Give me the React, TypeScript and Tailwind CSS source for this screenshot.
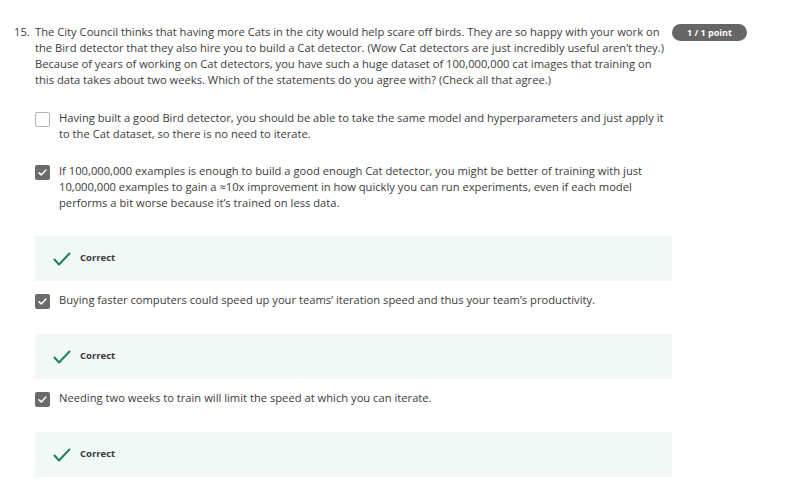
import React from 'react';

const font = { fontFamily: '"Open Sans", "Liberation Sans", sans-serif' };

function Box({ checked }: { checked: boolean }) {
  if (!checked) {
    return <span className="mt-[2px] block h-[15px] w-[15px] shrink-0 rounded-[2px] border border-[#b5b5b5] bg-white" />;
  }
  return (
    <span className="mt-[2px] flex h-[15px] w-[15px] shrink-0 items-center justify-center rounded-[2px] bg-[#6b6b6b]">
      <svg viewBox="0 0 16 16" className="h-[11px] w-[11px]" fill="none" stroke="#fff" strokeWidth="2.2" strokeLinecap="round" strokeLinejoin="round">
        <path d="M3 8.5l3.2 3L13 4.5" />
      </svg>
    </span>
  );
}

function Option({ checked, children }: { checked: boolean; children: React.ReactNode }) {
  return (
    <div className="flex items-start gap-[9px] pr-[4px]">
      <Box checked={checked} />
      <p className="text-[11.2px] leading-[16px] text-[#3c3c3c]">{children}</p>
    </div>
  );
}

function Correct() {
  return (
    <div className="flex h-[45px] items-center gap-[9px] bg-[#f2f8f6] pl-[18px]">
      <svg viewBox="0 0 18 14" className="h-[14px] w-[18px]" fill="none" stroke="#1f8354" strokeWidth="2" strokeLinecap="round" strokeLinejoin="round">
        <path d="M1.5 7.5l4.5 5L16.5 1.5" />
      </svg>
      <span className="text-[9.5px] font-bold text-[#3a3a3a]">Correct</span>
    </div>
  );
}

export default function App() {
  return (
    <div className="h-[483px] w-[795px] bg-white" style={font}>
      <div className="flex items-start pl-[14px] pt-[24px]">
        <div className="flex w-[651px] items-start">
          <span className="w-[21px] shrink-0 text-[11.2px] leading-[16px] text-[#3c3c3c]">15.</span>
          <div className="flex flex-1 flex-col">
            <p className="text-[11.2px] leading-[16px] text-[#3c3c3c]">
              The City Council thinks that having more Cats in the city would help scare off birds. They are so happy with your work on the Bird detector that they also hire you to build a Cat detector. (Wow Cat detectors are just incredibly useful aren’t they.) Because of years of working on Cat detectors, you have such a huge dataset of 100,000,000 cat images that training on this data takes about two weeks. Which of the statements do you agree with? (Check all that agree.)
            </p>
            <div className="mt-[22px] flex flex-col">
              <Option checked={false}>
                Having built a good Bird detector, you should be able to take the same model and hyperparameters and just apply it to the Cat dataset, so there is no need to iterate.
              </Option>
              <div className="mt-[21px]">
                <Option checked>
                  If 100,000,000 examples is enough to build a good enough Cat detector, you might be better of training with just 10,000,000 examples to gain a ≈10x improvement in how quickly you can run experiments, even if each model performs a bit worse because it’s trained on less data.
                </Option>
              </div>
              <div className="mt-[25px] w-[637px]">
                <Correct />
              </div>
              <div className="mt-[11px]">
                <Option checked>
                  Buying faster computers could speed up your teams’ iteration speed and thus your team’s productivity.
                </Option>
              </div>
              <div className="mt-[25px] w-[637px]">
                <Correct />
              </div>
              <div className="mt-[11px]">
                <Option checked>Needing two weeks to train will limit the speed at which you can iterate.</Option>
              </div>
              <div className="mt-[25px] w-[637px]">
                <Correct />
              </div>
            </div>
          </div>
        </div>
        <span className="ml-[7px] flex h-[17px] w-[75px] items-center justify-center rounded-full bg-[#666666] text-[9px] font-bold text-white">
          1 / 1 point
        </span>
      </div>
    </div>
  );
}
